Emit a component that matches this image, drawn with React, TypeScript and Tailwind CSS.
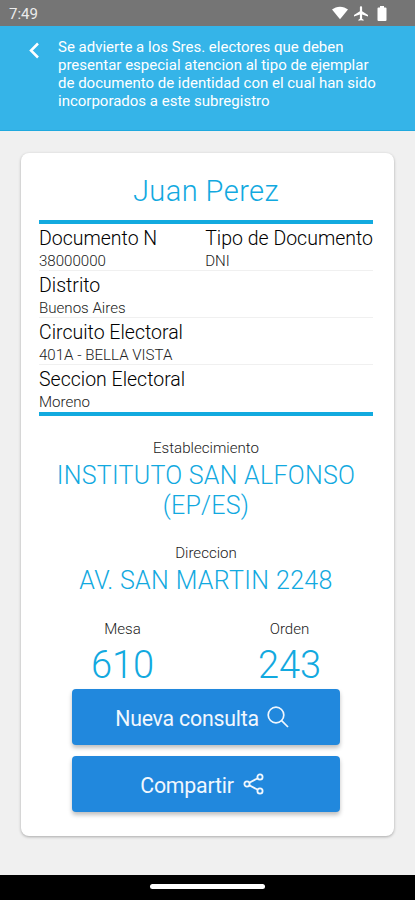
import type { ReactNode } from "react";

const rows = [
  [
    { label: "Documento N", value: "38000000" },
    { label: "Tipo de Documento", value: "DNI" },
  ],
  [{ label: "Distrito", value: "Buenos Aires" }],
  [{ label: "Circuito Electoral", value: "401A - BELLA VISTA" }],
  [{ label: "Seccion Electoral", value: "Moreno" }],
];

function StatusBar() {
  return (
    <div className="flex h-[26px] items-center justify-between bg-[#757575] pl-[9px] pr-[28px] text-white">
      <span className="pt-[1px] text-[15px] leading-[26px] text-[#ececec]">7:49</span>
      <div className="flex items-center">
        <svg width="16" height="14" viewBox="0 0 16 14" fill="currentColor">
          <path d="M0 3.6C2.2 1.7 5 .7 8 .7s5.800 1 8 2.900L8 13.300z" />
        </svg>
        <svg className="ml-[6px]" width="14" height="15" viewBox="2 2 19 20" fill="currentColor">
          <path d="M21 16v-2l-8-5V3.500C13 2.670 12.330 2 11.500 2S10 2.670 10 3.500V9l-8 5v2l8-2.500V19l-2 1.500V22l3.500-1 3.500 1v-1.500L13 19v-5.500z" />
        </svg>
        <svg className="ml-[9px]" width="10" height="15" viewBox="0 0 10 15" fill="currentColor">
          <path d="M3 0h4v1.500h1.500q1 0 1 1V14q0 1-1 1h-7q-1 0-1-1V2.500q0-1 1-1H3z" />
        </svg>
      </div>
    </div>
  );
}

function Header() {
  return (
    <header className="flex h-[105px] border-b border-[#1fa9de] bg-[#35b4e8] pl-[28px] pt-[13px] text-white">
      <svg className="mt-[3px]" width="12" height="17" viewBox="0 0 12 17" fill="none" stroke="currentColor" strokeWidth="2.500">
        <path d="M10 1.500 3 8.500l7 7" />
      </svg>
      <p className="ml-[18px] whitespace-nowrap text-[15px] leading-[17.900px]">
        Se advierte a los Sres. electores que deben
        <br />
        presentar especial atencion al tipo de ejemplar
        <br />
        de documento de identidad con el cual han sido
        <br />
        incorporados a este subregistro
      </p>
    </header>
  );
}

function Caption({ children }: { children: ReactNode }) {
  return <div className="text-[15.100px] leading-[18px] font-[350] text-[#222]">{children}</div>;
}

function Button({ children }: { children: ReactNode }) {
  return (
    <button className="flex h-[56px] w-[268px] items-center justify-center rounded-[4px] bg-[#2188dd] pr-[8px] pt-[4px] text-[21.300px] text-[#f1f7fd] tracking-[-0.010em] shadow-[0_3px_4px_rgba(0,0,0,0.25)]">
      {children}
    </button>
  );
}

export default function App() {
  return (
    <div className="flex h-[900px] w-[415px] flex-col overflow-hidden bg-[#f0f0f0] font-['Roboto',sans-serif]">
      <StatusBar />
      <Header />

      <main className="flex-1 pl-[21px] pt-[22px]">
        <div className="h-[683px] w-[373px] rounded-[8px] bg-white pl-[18px] pr-[21px] pt-[20px] shadow-[0_1px_3px_rgba(0,0,0,0.3)]">
          <h1 className="text-center text-[29px] leading-[36px] font-[350] tracking-[0.450px] text-[#12a9df]">
            Juan Perez
          </h1>

          <div className="mt-[11px] border-y-4 border-[#12aadf]">
            {rows.map((row, i) => (
              <div
                key={i}
                className="flex h-[47px] justify-between border-b border-[#f0f0f0] pt-[4px] last:border-b-0"
              >
                {row.map((cell) => (
                  <div key={cell.label} className="whitespace-nowrap">
                    <div className="text-[19.500px] leading-[22px] font-[350] text-black">{cell.label}</div>
                    <div className="text-[15.100px] leading-[23px] font-[350] text-[#222]">{cell.value}</div>
                  </div>
                ))}
              </div>
            ))}
          </div>

          <div className="mt-[23px] text-center">
            <Caption>Establecimiento</Caption>
            <p className="mt-[4px] text-[25px] leading-[29.500px] font-[350] tracking-[0.250px] text-[#12a9df]">
              INSTITUTO SAN ALFONSO
              <br />
              (EP/ES)
            </p>
          </div>

          <div className="mt-[24px] text-center">
            <Caption>Direccion</Caption>
            <p className="mt-[4px] text-[25px] leading-[29.500px] font-[350] tracking-[0.350px] text-[#12a9df]">
              AV. SAN MARTIN 2248
            </p>
          </div>

          <div className="mt-[24px] grid grid-cols-2 text-center">
            <div>
              <Caption>Mesa</Caption>
              <p className="text-[38px] leading-[55px] font-[350] text-[#12a9df]">610</p>
            </div>
            <div>
              <Caption>Orden</Caption>
              <p className="text-[38px] leading-[55px] font-[350] text-[#12a9df]">243</p>
            </div>
          </div>

          <div className="-mt-[4px] flex flex-col items-center gap-[11px]">
            <Button>
              Nueva consulta
              <svg className="-mt-[4px] ml-[8px]" width="22" height="22" viewBox="0 0 22 22" fill="none" stroke="currentColor" strokeWidth="1.700">
                <circle cx="9" cy="9" r="7.800" />
                <path d="m14.600 14.600 6.400 6.400" />
              </svg>
            </Button>
            <Button>
              Compartir
              <svg className="-mt-[4px] ml-[9px]" width="21" height="22" viewBox="0 0 21 22" fill="none" stroke="currentColor" strokeWidth="1.800">
                <circle cx="4" cy="11" r="2.600" />
                <circle cx="17" cy="4" r="2.600" />
                <circle cx="17" cy="18" r="2.600" />
                <path d="m6.300 9.700 8.400-4.500M6.300 12.300l8.400 4.500" />
              </svg>
            </Button>
          </div>
        </div>
      </main>

      <footer className="flex h-[25px] justify-center bg-black pt-[9px]">
        <div className="h-[5px] w-[115px] rounded-full bg-white" />
      </footer>
    </div>
  );
}
